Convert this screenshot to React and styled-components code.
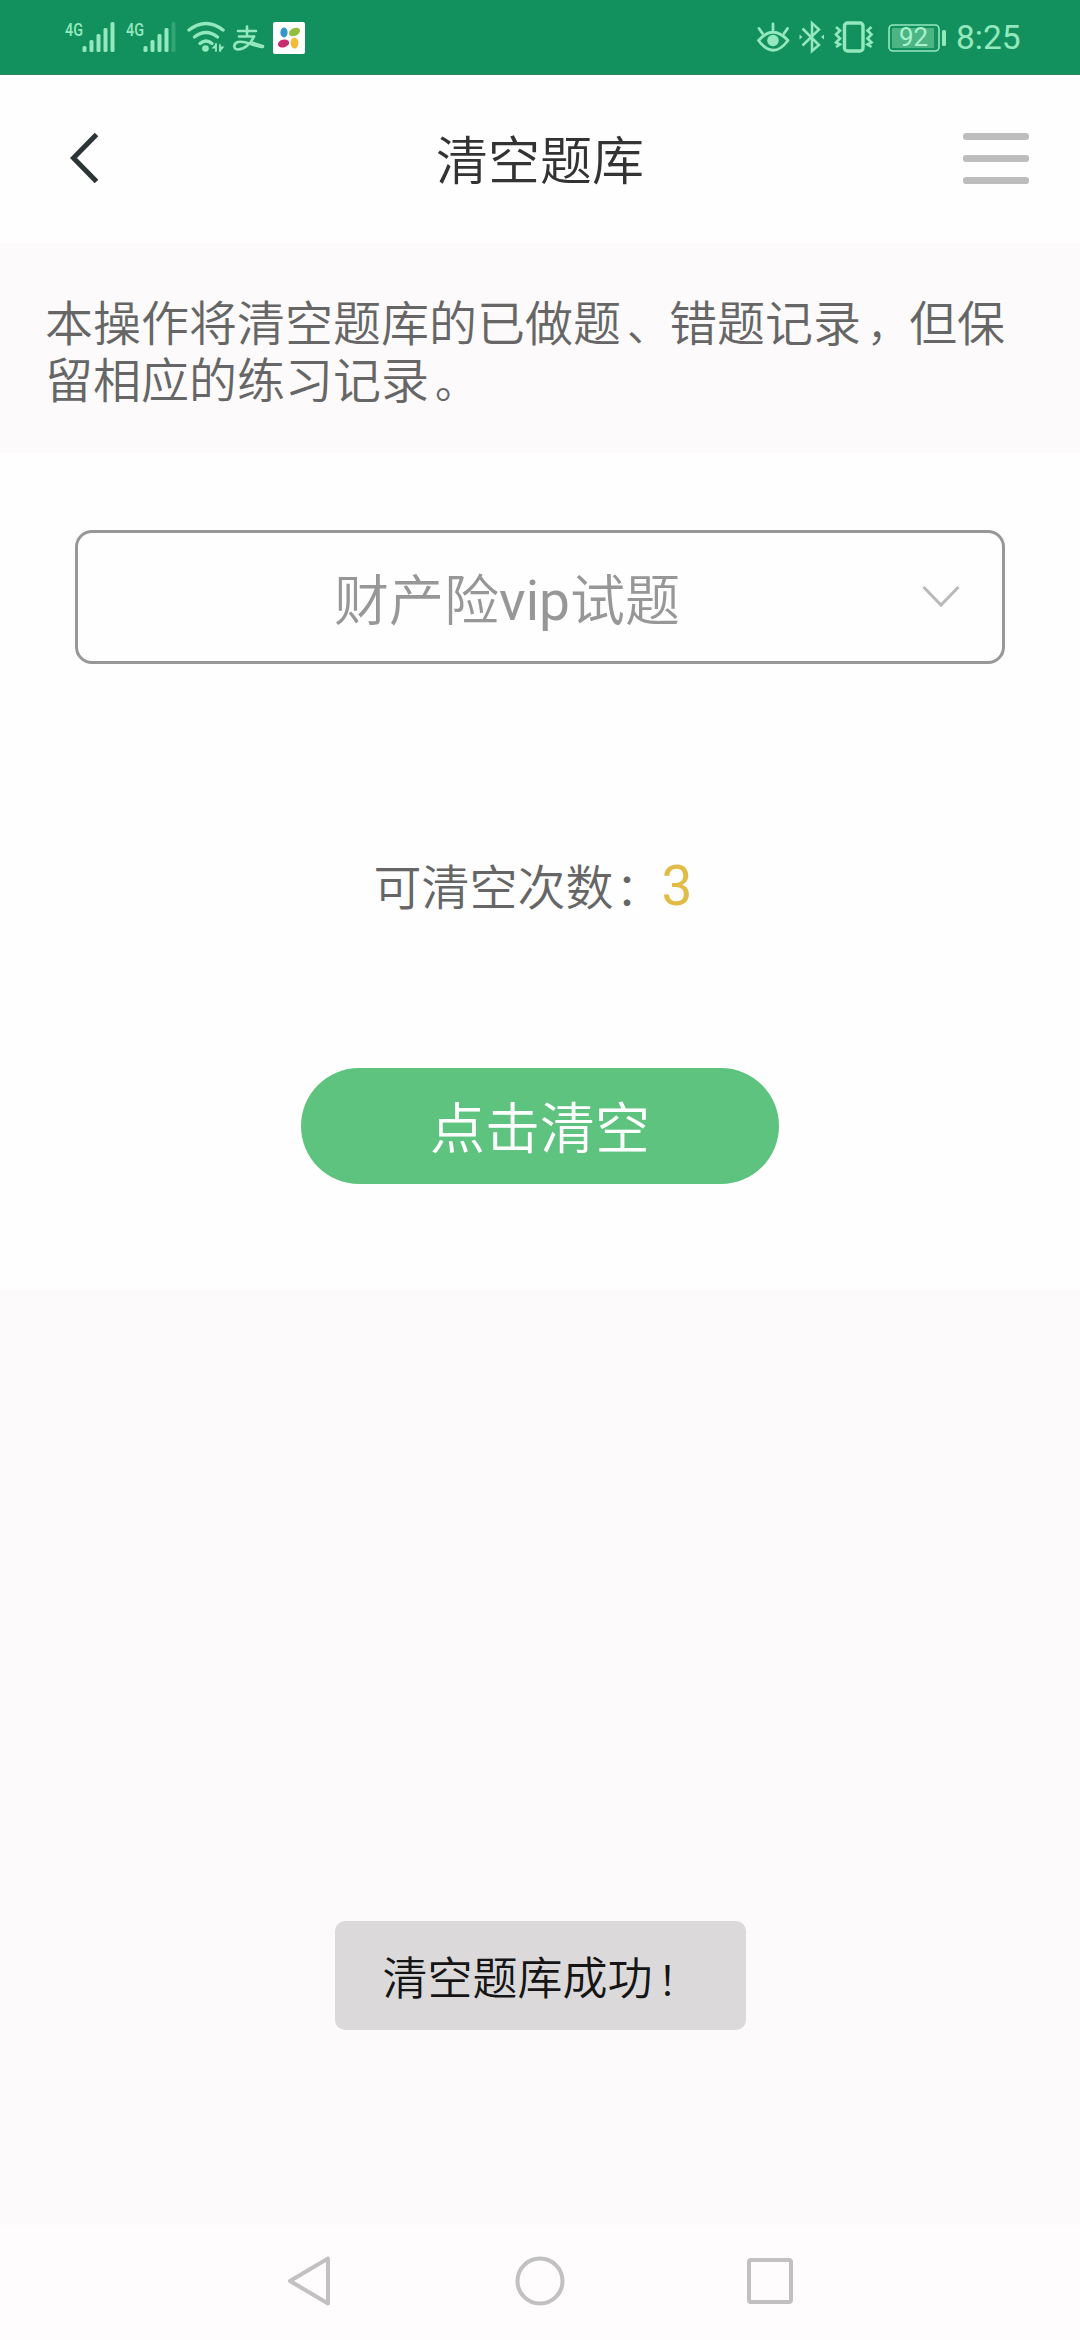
import React from "react";
import styled, { createGlobalStyle } from "styled-components";

const GlobalStyle = createGlobalStyle`
  *, *::before, *::after { box-sizing: border-box; }
  html, body { margin: 0; padding: 0; background: #fcfafb; }
  body { font-family: Roboto, "Noto Sans CJK SC", sans-serif; }
  svg { display: block; flex: none; }
`;

const Screen = styled.div`
  width: 1080px;
  height: 2340px;
  display: flex;
  flex-direction: column;
  background: #fcfafb;
  overflow: hidden;
`;

const StatusBar = styled.div`
  height: 75px;
  flex: none;
  display: flex;
  justify-content: space-between;
  background: #12915e;
  border-bottom: 1px solid #2b8560;
  color: #94e8bd;
`;

const StatusGroup = styled.div`
  display: flex;
  padding-left: ${(p) => p.$left || 0}px;
  padding-right: ${(p) => p.$right || 0}px;
`;

const Clock = styled.span`
  width: 66px;
  margin-left: 9px;
  font-size: 33.5px;
  line-height: 76px;
  white-space: nowrap;
`;

const Header = styled.header`
  height: 168px;
  flex: none;
  display: flex;
  align-items: center;
  justify-content: space-between;
  padding: 0 51px 2px 70px;
  background: #fefefe;
`;

const IconButton = styled.button`
  width: 66px;
  height: ${(p) => (p.$spread ? 51 : 52)}px;
  padding: 0;
  border: 0;
  background: none;
  display: flex;
  flex-direction: column;
  justify-content: ${(p) => (p.$spread ? "space-between" : "center")};
`;

const MenuBar = styled.span`
  width: 66px;
  height: 7px;
  border-radius: 3px;
  background: #bdbdbd;
`;

const Title = styled.h1`
  margin: 0;
  padding: 10px 19px 0 0;
  font-size: 52px;
  font-weight: 350;
  line-height: 60px;
  color: #333;
`;

const Notice = styled.p`
  margin: 0;
  height: 210px;
  flex: none;
  padding: 53px 72px 0 45px;
  font-size: 48px;
  font-weight: 350;
  line-height: 57px;
  color: #666;
  background: #fcfafb;
`;

const Mark = styled.span`
  padding-left: ${(p) => p.$shift}px;
  font-size: ${(p) => p.$size}px;
  line-height: 1;
`;

const Panel = styled.main`
  height: 837px;
  flex: none;
  display: flex;
  flex-direction: column;
  align-items: center;
  padding-top: 77px;
  background: #fefefe;
`;

const Select = styled.div`
  width: 930px;
  height: 134px;
  display: flex;
  align-items: center;
  padding: 0 42px 0 34px;
  border: 3px solid #979797;
  border-radius: 17px;
`;

const SelectValue = styled.span`
  flex: 1;
  padding: 7px 20px 0 0;
  text-align: center;
  font-size: 55px;
  font-weight: 350;
  line-height: 70px;
  color: #979797;
`;

const Latin = styled.span`
  font-weight: 400;
`;

const Remaining = styled.div`
  height: 70px;
  width: 333px;
  margin-top: 187px;
  display: flex;
  align-items: baseline;
  font-size: 48px;
  font-weight: 350;
  line-height: 70px;
  color: #666;
  white-space: nowrap;
`;

const Count = styled.span`
  font-size: 55px;
  font-weight: 400;
  color: #e2bb47;
`;

const ClearButton = styled.button`
  width: 478px;
  height: 116px;
  margin-top: 147px;
  padding: 6px 0 0;
  border: 0;
  border-radius: 58px;
  background: #5dc37f;
  color: #fff;
  font: 350 55px/70px Roboto, "Noto Sans CJK SC", sans-serif;
`;

const Lower = styled.section`
  flex: 1;
  display: flex;
  justify-content: center;
  align-items: flex-start;
  padding-top: 631px;
`;

const Toast = styled.div`
  width: 411px;
  height: 109px;
  padding: 6px 0 0 48px;
  border-radius: 10px;
  background: #dbd9da;
  color: #151515;
  font-size: 45px;
  font-weight: 350;
  line-height: 105px;
  white-space: nowrap;
`;

const NavBar = styled.nav`
  height: 115px;
  flex: none;
  display: flex;
  justify-content: space-between;
  align-items: center;
  padding: 0 287px 4px 286px;
  background: #fefcfd;
`;

function Signal({ weak }) {
  return (
    <svg width="61" height="75" viewBox="0 0 61 75">
      <text x="0" y="35.5" fontSize="18" fontWeight="500" fontFamily="Roboto, sans-serif" textLength="18" lengthAdjust="spacingAndGlyphs" fill="currentColor">4G</text>
      <g fill="currentColor">
        <rect x="17.5" y="46" width="4" height="6" rx="1.5" />
        <rect x="24.5" y="40" width="4" height="12" rx="1.5" />
        <rect x="31.5" y="34" width="4" height="18" rx="1.5" />
        <rect x="38.5" y="28" width="4" height="24" rx="1.5" />
        <rect x="45.5" y="22" width="4" height="30" rx="1.5" opacity={weak ? 0.25 : 1} />
      </g>
    </svg>
  );
}

function Wifi() {
  return (
    <svg width="46" height="75" viewBox="0 0 46 75" fill="none" stroke="currentColor" strokeWidth="3.4" strokeLinecap="round">
      <path d="M2 30Q19 17 36 30" />
      <path d="M7.500 37Q19 28 30.500 37" />
      <path d="M13 43.500Q19 38.500 25 43.500" />
      <circle cx="18.500" cy="48.500" r="3.300" fill="currentColor" stroke="none" />
      <path d="M29 44v7M33 45v6" strokeWidth="1.800" />
      <path d="M29 43.500l-4.500 5H29zM33 52l4.500-5.500H33z" fill="currentColor" stroke="none" />
    </svg>
  );
}

function AlipayMark() {
  return (
    <svg width="40" height="75" viewBox="0 0 40 75" fill="none" stroke="currentColor" strokeWidth="2.600" strokeLinecap="round">
      <path d="M5 31h18M14 26.500v9M6 36.500h15" />
      <path d="M21 36.500C18 44 11 49.500 5 49.500C0 49.500 0 43.500 5 42C12 40.500 18 45 29 47" />
      <path d="M20 43.500L29.500 46.500" strokeWidth="3.600" />
    </svg>
  );
}

function PinwheelMark() {
  return (
    <svg width="32" height="75" viewBox="0 0 32 75">
      <rect y="22" width="32" height="32" rx="2" fill="#fff" />
      <ellipse cx="11" cy="32.500" rx="3.600" ry="5" fill="#3298cc" />
      <ellipse cx="21.500" cy="32" rx="5.800" ry="3.800" transform="rotate(-25 21.500 32)" fill="#94be3d" />
      <ellipse cx="10.500" cy="43.500" rx="5.800" ry="3.900" transform="rotate(-15 10.500 43.500)" fill="#c72c70" />
      <ellipse cx="21.500" cy="43" rx="3.900" ry="5.500" fill="#efbd38" />
    </svg>
  );
}

function Eye() {
  return (
    <svg width="42" height="75" viewBox="0 0 42 75" fill="none" stroke="currentColor" strokeWidth="2.800" strokeLinecap="round">
      <path d="M1.500 40.500Q16 24 31 40.500Q16 60 1.500 40.500Z" strokeLinejoin="round" />
      <circle cx="16" cy="40.500" r="5.800" fill="currentColor" stroke="none" />
      <path d="M16 24v6M2 28.500l3.500 5M30.500 28.500l-3.500 5" />
    </svg>
  );
}

function Bluetooth() {
  return (
    <svg width="35" height="75" viewBox="0 0 35 75" fill="none" stroke="currentColor" strokeWidth="2.500">
      <path d="M3.500 28.500L20 45L13 51V23L20 29.500L3.500 45.500" />
      <path d="M.5 34.500v5l3-2.500zM25 34.500v5l-3-2.500z" fill="currentColor" stroke="none" />
    </svg>
  );
}

function Vibrate() {
  return (
    <svg width="54" height="75" viewBox="0 0 54 75" fill="none" stroke="currentColor" strokeWidth="3">
      <rect x="10.500" y="23" width="18.500" height="28" rx="3" strokeWidth="3.400" />
      <path d="M2 27l4 3.500l-4 4l4 4l-4 4l4 2L2 47" strokeWidth="2.600" />
      <path d="M37.500 27l-4 3.500l4 4l-4 4l4 4l-4 2L37.500 47" strokeWidth="2.600" />
    </svg>
  );
}

function Battery() {
  return (
    <svg width="59" height="75" viewBox="0 0 59 75">
      <rect x="1" y="25" width="50" height="26" rx="4" fill="none" stroke="currentColor" strokeWidth="1.600" />
      <rect x="4" y="28" width="42" height="20" rx="1" fill="#4db483" />
      <text x="25.500" y="46" textAnchor="middle" fontSize="26" fontFamily="Roboto, sans-serif" fill="#a7f2cc">92</text>
      <rect x="54" y="30" width="4" height="16" rx="1.500" fill="currentColor" />
    </svg>
  );
}

export default function App() {
  return (
    <>
      <GlobalStyle />
      <Screen>
        <StatusBar>
          <StatusGroup $left={65}>
            <Signal />
            <Signal weak />
            <Wifi />
            <AlipayMark />
            <PinwheelMark />
          </StatusGroup>
          <StatusGroup $right={58}>
            <Eye />
            <Bluetooth />
            <Vibrate />
            <Battery />
            <Clock>8:25</Clock>
          </StatusGroup>
        </StatusBar>

        <Header>
          <IconButton aria-label="返回">
            <svg width="30" height="52" viewBox="0 0 30 52" fill="none" stroke="#2b3535" strokeWidth="5">
              <path d="M26.500 2.500L3.500 26L26.500 49.500" />
            </svg>
          </IconButton>
          <Title>清空题库</Title>
          <IconButton $spread aria-label="菜单">
            <MenuBar />
            <MenuBar />
            <MenuBar />
          </IconButton>
        </Header>

        <Notice>
          本操作将清空题库的已做题<Mark $shift={6} $size={42}>、</Mark>错题记录<Mark $shift={6} $size={42}>，</Mark>但保留相应的练习记录<Mark $shift={6} $size={42}>。</Mark>
        </Notice>

        <Panel>
          <Select>
            <SelectValue>
              财产险<Latin>vip</Latin>试题
            </SelectValue>
            <svg width="38" height="24" viewBox="0 0 38 24" fill="none" stroke="#b9b9b9" strokeWidth="3">
              <path d="M1.500 2L19 20L36.500 2" />
            </svg>
          </Select>
          <Remaining>
            可清空次数<Mark $shift={2} $size={46}>：</Mark>
            <Count>3</Count>
          </Remaining>
          <ClearButton>点击清空</ClearButton>
        </Panel>

        <Lower>
          <Toast>
            清空题库成功<Mark $shift={5} $size={40}>！</Mark>
          </Toast>
        </Lower>

        <NavBar>
          <svg width="46" height="54" viewBox="0 0 46 54" fill="none" stroke="#c1c1c1" strokeWidth="4" strokeLinejoin="round">
            <path d="M4 27L42 4.500V49.500Z" />
          </svg>
          <svg width="50" height="50" viewBox="0 0 50 50" fill="none" stroke="#c1c1c1" strokeWidth="4">
            <circle cx="25" cy="25" r="22.500" />
          </svg>
          <svg width="46" height="46" viewBox="0 0 46 46" fill="none" stroke="#c1c1c1" strokeWidth="4">
            <rect x="2" y="2" width="42" height="42" rx="2" />
          </svg>
        </NavBar>
      </Screen>
    </>
  );
}
